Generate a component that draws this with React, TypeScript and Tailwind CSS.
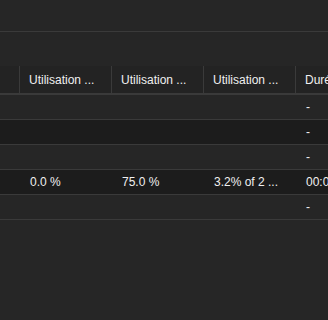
const columns = ["Utilisation ...", "Utilisation ...", "Utilisation ...", "Durée"];

const rows: string[][] = [
  ["", "", "", "-"],
  ["", "", "", "-"],
  ["", "", "", "-"],
  ["0.0 %", "75.0 %", "3.2% of 2 ...", "00:00:00"],
  ["", "", "", "-"],
];

export default function App() {
  return (
    <div
      className="w-[328px] h-[320px] overflow-hidden bg-[#262626] text-[12px] text-[#f0f0f0]"
      style={{ fontFamily: '"Liberation Sans", Arial, sans-serif' }}
    >
      <div className="h-[32px] border-b border-[#3a3a3a]" />
      <div className="h-[34px]" />

      <div className="flex h-[29px] bg-[#232323] border-b-2 border-[#3a3a3a] whitespace-nowrap">
        <div className="w-[20px] shrink-0 border-r border-[#3a3a3a]" />
        {columns.map((c, i) => (
          <div
            key={i}
            className="w-[92px] shrink-0 flex items-center pl-[9px] border-r border-[#3a3a3a]"
          >
            {c}
          </div>
        ))}
      </div>

      {rows.map((r, ri) => (
        <div
          key={ri}
          className={
            "flex h-[25px] border-b border-[#3a3a3a] whitespace-nowrap " +
            (ri % 2 === 1 ? "bg-[#1c1c1c]" : "bg-[#262626]")
          }
        >
          <div className="w-[20px] shrink-0" />
          {r.map((v, i) => (
            <div key={i} className="w-[92px] shrink-0 flex items-center pl-[10px] overflow-hidden">
              {v}
            </div>
          ))}
        </div>
      ))}
    </div>
  );
}
